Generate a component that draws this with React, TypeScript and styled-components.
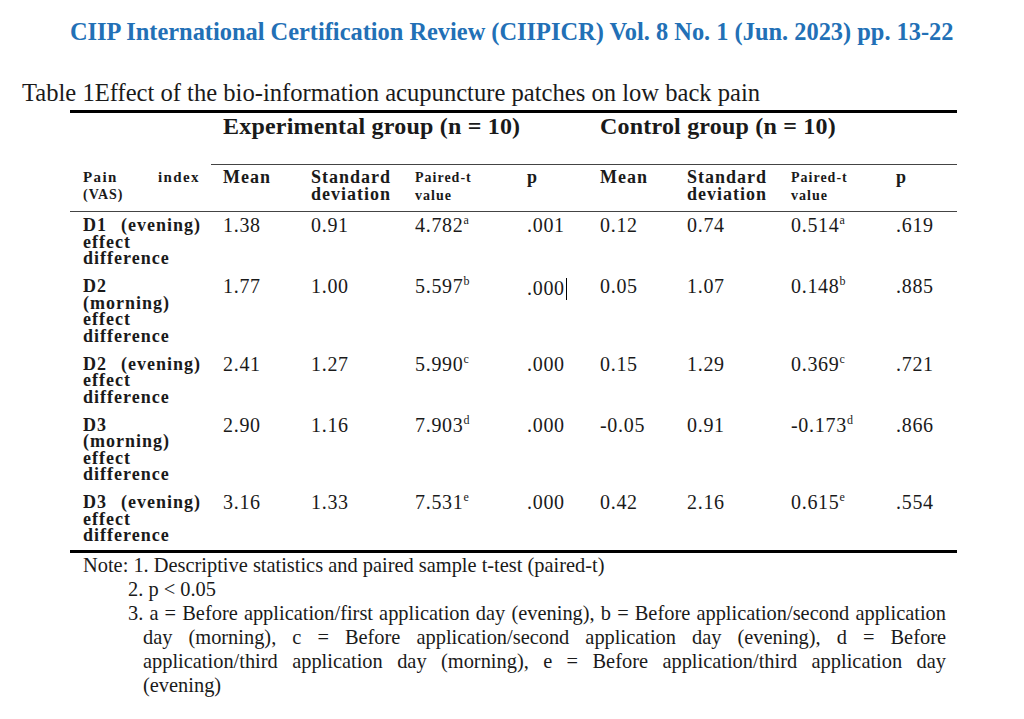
import { FC, ReactNode } from 'react';
import styled, { createGlobalStyle } from 'styled-components';

const GlobalStyle = createGlobalStyle`
  html, body {
    margin: 0;
    padding: 0;
    background: #ffffff;
  }
  body {
    font-family: 'Liberation Serif', 'Times New Roman', serif;
    color: #1a1a1a;
  }
`;

const COLUMNS = '141px 88px 104px 112px 73px 87px 104px 105px 73px';

type Row = {
  label: string[];
  values: string[];
  marks: string[];
  caret?: boolean;
};

const rows: Row[] = [
  {
    label: ['D1 (evening)', 'effect', 'difference'],
    values: ['1.38', '0.91', '4.782', '.001', '0.12', '0.74', '0.514', '.619'],
    marks: ['a', 'a'],
  },
  {
    label: ['D2', '(morning)', 'effect', 'difference'],
    values: ['1.77', '1.00', '5.597', '.000', '0.05', '1.07', '0.148', '.885'],
    marks: ['b', 'b'],
    caret: true,
  },
  {
    label: ['D2 (evening)', 'effect', 'difference'],
    values: ['2.41', '1.27', '5.990', '.000', '0.15', '1.29', '0.369', '.721'],
    marks: ['c', 'c'],
  },
  {
    label: ['D3', '(morning)', 'effect', 'difference'],
    values: ['2.90', '1.16', '7.903', '.000', '-0.05', '0.91', '-0.173', '.866'],
    marks: ['d', 'd'],
  },
  {
    label: ['D3 (evening)', 'effect', 'difference'],
    values: ['3.16', '1.33', '7.531', '.000', '0.42', '2.16', '0.615', '.554'],
    marks: ['e', 'e'],
  },
];

// third note, broken where the source document breaks it
const noteThree = [
  '3. a = Before application/first application day (evening), b = Before application/second application',
  'day (morning), c = Before application/second application day (evening), d = Before',
  'application/third application day (morning), e = Before application/third application day',
  '(evening)',
];

const ColumnHeads: FC = () => (
  <>
    <HeadCell>
      <HeadLine>Mean</HeadLine>
    </HeadCell>
    <HeadCell>
      <HeadLine>Standard</HeadLine>
      <HeadLine>deviation</HeadLine>
    </HeadCell>
    <HeadCell>
      <SmallHead>Paired-t</SmallHead>
      <SmallHead>value</SmallHead>
    </HeadCell>
    <HeadCell>
      <HeadLine>p</HeadLine>
    </HeadCell>
  </>
);

const Value: FC<{ text: string; mark?: string; children?: ReactNode }> = ({
  text,
  mark,
  children,
}) => (
  <ValueCell>
    {text}
    {mark && <Sup>{mark}</Sup>}
    {children}
  </ValueCell>
);

const App: FC = () => {
  return (
    <Page>
      <GlobalStyle />
      <Journal>
        CIIP International Certification Review (CIIPICR) Vol. 8 No. 1 (Jun.
        2023) pp. 13-22
      </Journal>
      <Caption>
        Table 1Effect of the bio-information acupuncture patches on low back
        pain
      </Caption>

      <Table>
        <GroupRow>
          <div />
          <GroupCell>Experimental group (n = 10)</GroupCell>
          <GroupCell>Control group (n = 10)</GroupCell>
        </GroupRow>

        <HeaderRow>
          <HeadCell $first>
            <PainLine>Pain index</PainLine>
            <VasLine>(VAS)</VasLine>
          </HeadCell>
          <ColumnHeads />
          <ColumnHeads />
        </HeaderRow>

        {rows.map((row) => (
          <BodyRow key={row.label.join(' ')}>
            <LabelCell>
              {row.label.map((line, i) => (
                <LabelLine key={i} $justify={i === 0 && line.includes(' ')}>
                  {line}
                </LabelLine>
              ))}
            </LabelCell>
            {row.values.map((v, i) => (
              <Value
                key={i}
                text={v}
                mark={i === 2 ? row.marks[0] : i === 6 ? row.marks[1] : undefined}
              >
                {row.caret && i === 3 && <Caret />}
              </Value>
            ))}
          </BodyRow>
        ))}
      </Table>

      <Notes>
        <NoteLine>
          Note: 1. Descriptive statistics and paired sample t-test (paired-t)
        </NoteLine>
        <NoteItem>
          <NoteText>2. p &lt; 0.05</NoteText>
        </NoteItem>
        <NoteItem>
          {noteThree.map((line, i) => (
            <NoteText
              key={i}
              $indent={i > 0}
              $justify={i < noteThree.length - 1}
            >
              {line}
            </NoteText>
          ))}
        </NoteItem>
      </Notes>
    </Page>
  );
};

export default App;

const Page = styled.div`
  width: 1024px;
  min-height: 719px;
  padding-top: 18px;
  box-sizing: border-box;
`;

const Journal = styled.h1`
  margin: 0 0 0 70px;
  font-size: 24.4px;
  line-height: 28px;
  font-weight: bold;
  color: #2270b6;
  white-space: nowrap;
`;

const Caption = styled.p`
  margin: 34px 0 4px 22px;
  font-size: 24.6px;
  line-height: 26px;
  color: #1a1a1a;
  white-space: nowrap;
`;

const Table = styled.div`
  margin-left: 70px;
  width: 887px;
  border-top: 3px solid #000;
  border-bottom: 3px solid #000;
`;

const GridRow = styled.div`
  display: grid;
  grid-template-columns: ${COLUMNS};
`;

const GroupRow = styled(GridRow)``;

const GroupCell = styled.div`
  grid-column: span 4;
  padding: 0 0 25px 12px;
  font-size: 24px;
  line-height: 26px;
  font-weight: bold;
  letter-spacing: 0.2px;
  border-bottom: 1px solid #444;
  white-space: nowrap;
`;

const HeaderRow = styled(GridRow)`
  border-bottom: 1px solid #444;
`;

const HeadCell = styled.div<{ $first?: boolean }>`
  padding: 4px ${(p) => (p.$first ? '11px' : '0')} 6px
    ${(p) => (p.$first ? '13px' : '12px')};
  font-weight: bold;
`;

const HeadLine = styled.div`
  font-size: 18px;
  line-height: 17px;
  letter-spacing: 1px;
  white-space: nowrap;
`;

const SmallHead = styled.div`
  font-size: 14px;
  line-height: 18px;
  letter-spacing: 1px;
  white-space: nowrap;
`;

const PainLine = styled.div`
  font-size: 15px;
  line-height: 17px;
  letter-spacing: 1.4px;
  text-align: justify;
  text-align-last: justify;
`;

const VasLine = styled.div`
  font-size: 14px;
  line-height: 17px;
  letter-spacing: 1px;
`;

const BodyRow = styled(GridRow)`
  padding: 5px 0 6.5px;
`;

const LabelCell = styled.div`
  padding: 0 10px 0 13px;
  font-weight: bold;
`;

const LabelLine = styled.div<{ $justify?: boolean }>`
  font-size: 18px;
  line-height: 16.5px;
  letter-spacing: 1px;
  white-space: ${(p) => (p.$justify ? 'normal' : 'nowrap')};
  text-align: ${(p) => (p.$justify ? 'justify' : 'left')};
  text-align-last: ${(p) => (p.$justify ? 'justify' : 'auto')};
`;

const ValueCell = styled.div`
  padding-left: 12px;
  font-size: 20px;
  line-height: 16.5px;
  letter-spacing: 0.7px;
  white-space: nowrap;
`;

const Sup = styled.sup`
  font-size: 12px;
  line-height: 0;
  vertical-align: 8px;
  letter-spacing: 0;
`;

const Caret = styled.span`
  display: inline-block;
  width: 1px;
  height: 22px;
  margin-left: 1px;
  background: #000;
  vertical-align: -5px;
`;

const Notes = styled.div`
  padding-left: 83px;
  width: 946px;
  box-sizing: border-box;
  font-size: 20.4px;
  line-height: 24px;
  color: #1a1a1a;
`;

const NoteLine = styled.div`
  white-space: nowrap;
`;

const NoteItem = styled.div`
  margin-left: 45px;
`;

const NoteText = styled.div<{ $indent?: boolean; $justify?: boolean }>`
  padding-left: ${(p) => (p.$indent ? '15px' : '0')};
  white-space: nowrap;
  text-align: ${(p) => (p.$justify ? 'justify' : 'left')};
  text-align-last: ${(p) => (p.$justify ? 'justify' : 'auto')};
  ${(p) => p.$justify && 'white-space: normal;'}
`;
